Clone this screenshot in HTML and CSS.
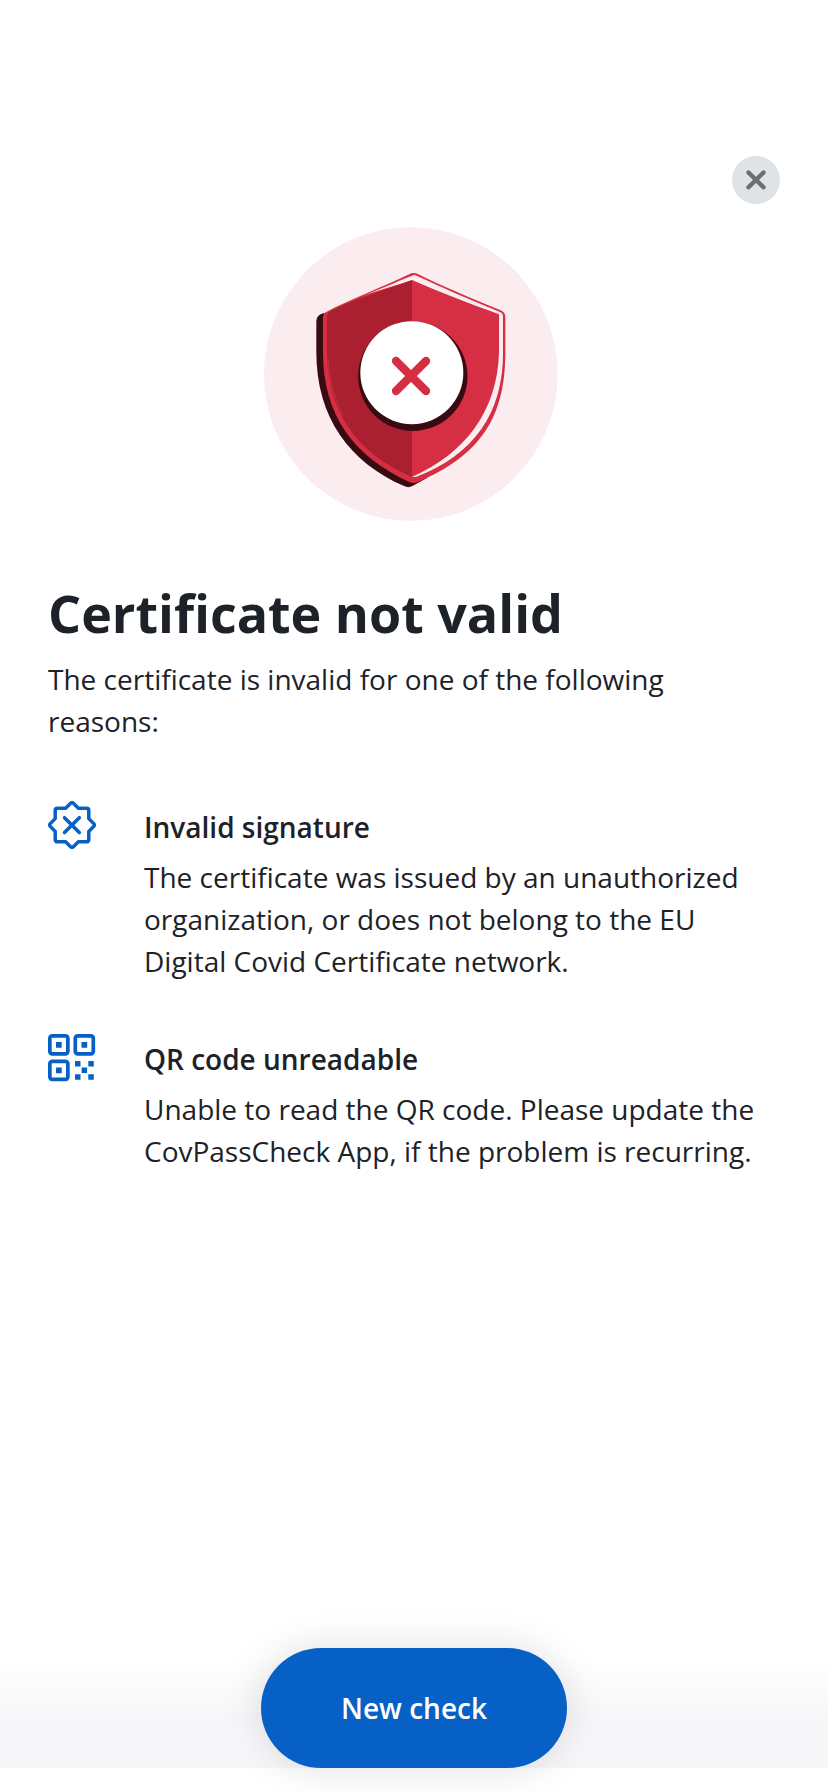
FILE: index.html
```html
<!DOCTYPE html>
<html lang="en">
<head>
<meta charset="utf-8">
<title>Certificate not valid</title>
<link rel="stylesheet" href="styles.css">
</head>
<body>
<div class="screen">
  <header class="topbar">
    <button class="close" aria-label="Close">
      <svg width="48" height="48" viewBox="0 0 48 48"><path d="M16.500 16.500L31.500 31.300M31.500 16.500L16.500 31.300" stroke="#67706d" stroke-width="4.400" stroke-linecap="round"/></svg>
    </button>
  </header>
  <main class="content">
    <svg class="hero" viewBox="42 36 882 882">
      <circle cx="482.500" cy="477" r="440.500" fill="#fbecef"/>
      <path fill="#380a11" d="M222 294Q199 300 199 318V410C199 610 300 742 464 814Q474 819 486 814L532 788L500 700L260 320Z"/>
      <path fill="#d62f43" d="M484 175Q492 172 502 176C580 215 650 243 752 286Q766 292 766 306V412C766 610 690 722 502 802Q490 807 478 801C310 724 219 600 219 412V306Q219 296 230 290C300 254 400 215 484 175Z"/>
      <path fill="#fbecef" d="M486 182Q493 178 500 182C580 220 650 249 750 291Q759 295 759 304V412C760 595 670 722 497 786L486 786V196L335 242C390 224 435 202 486 182Z"/>
      <path fill="#d62f43" d="M486 195C570 232 655 264 747 298V412C742 590 645 716 486 786Z"/>
      <path fill="#aa2030" d="M486 195V786C320 716 232 590 231 412V306Q231 295 242 288C310 252 400 228 486 195Z"/>
      <path d="M234 435C238 500 254 550 278 600" fill="none" stroke="#d04c5c" stroke-width="1.500"/>
      <circle cx="488.500" cy="484" r="164" fill="#380a11"/>
      <circle cx="485.500" cy="473" r="154.500" fill="#fff"/>
      <path d="M438 438L528 528M528 438L438 528" stroke="#d62f43" stroke-width="25" stroke-linecap="round"/>
    </svg>
    <h1 class="title">Certificate not valid</h1>
    <p class="text">The certificate is invalid for one of the following reasons:</p>
    <ul class="reasons">
      <li class="reason">
        <svg class="icon icon-seal" viewBox="0 0 48 48" fill="none" stroke="#0660c6" stroke-width="3.500" stroke-linecap="round" stroke-linejoin="round"><path d="M22.600 2.300Q24 1 25.400 2.300L30.400 7.200H38.400Q40.800 7.200 40.800 9.600V17.600L45.700 22.600Q47 24 45.700 25.400L40.800 30.400V38.400Q40.800 40.800 38.400 40.800H30.400L25.400 45.700Q24 47 22.600 45.700L17.600 40.800H9.600Q7.200 40.800 7.200 38.400V30.400L2.300 25.400Q1 24 2.300 22.600L7.200 17.600V9.600Q7.200 7.200 9.600 7.200H17.600Z"/><path d="M16.500 16.700L31.300 31.500M31.300 16.700L16.500 31.500"/></svg>
        <div class="body">
          <h2 class="subtitle">Invalid signature</h2>
          <p class="text">The certificate was issued by an unauthorized organization, or does not belong to the EU Digital Covid Certificate network.</p>
        </div>
      </li>
      <li class="reason">
        <svg class="icon icon-qr" viewBox="0 0 48 48" fill="#0660c6"><g fill="none" stroke="#0660c6" stroke-width="3.700"><rect x="1.850" y="1.850" width="18" height="18" rx="2.300"/><rect x="27.300" y="1.850" width="18" height="18" rx="2.300"/><rect x="1.850" y="27.300" width="18" height="18" rx="2.300"/></g><path d="M8 8h5.700v5.700H8zM33.500 8h5.700v5.700h-5.700zM8 33.500h5.700v5.700H8zM27 27h5.500v5.500H27zM40.300 27h5.500v5.500h-5.500zM33.600 33.600h5.500v5.500h-5.500zM27 40.300h5.500v5.500H27zM40.300 40.300h5.500v5.500h-5.500z"/></svg>
        <div class="body">
          <h2 class="subtitle">QR code unreadable</h2>
          <p class="text">Unable to read the QR code. Please update the CovPassCheck App, if the problem is recurring.</p>
        </div>
      </li>
    </ul>
  </main>
  <footer class="actions"><button class="primary">New check</button></footer>
</div>
</body>
</html>
```
FILE: styles.css
```css
* { box-sizing: border-box; margin: 0; padding: 0; }
body { background: #fff; color: #1d2228; font-family: "Open Sans", "Noto Sans", sans-serif; }
.screen { display: flex; flex-direction: column; height: 1792px; padding-bottom: 24px; overflow: hidden; }
.topbar { display: flex; justify-content: flex-end; padding: 156px 48px 0; }
.close { width: 48px; height: 48px; border: 0; border-radius: 50%; background: #dfe3e6; }
.close svg { display: block; }
.content { display: flex; flex-direction: column; flex: 1; padding: 23px 48px 0; }
.hero { width: 294px; height: 294px; margin-left: 216px; }
.title { margin-top: 57px; font-size: 52px; line-height: 70px; font-weight: 700; }
.title + .text { margin-top: 10px; }
.text { font-size: 28px; line-height: 42px; }
.reasons { display: flex; flex-direction: column; gap: 56px; margin-top: 64px; list-style: none; }
.reason { display: flex; align-items: flex-start; gap: 48px; }
.icon { flex: none; width: 48px; height: 48px; }
.icon-seal { margin-top: -5px; }
.icon-qr { margin-top: -4px; }
.body { flex: 1; }
.subtitle { margin-bottom: 8px; font-size: 28px; line-height: 42px; font-weight: 600; }
.actions { display: flex; justify-content: center; background: linear-gradient(#fff 8%, #f7f7fa 58%); }
.primary { width: 306px; height: 120px; border: 0; border-radius: 60px; background: #0660c6; color: #fff; font: 600 28px/42px "Open Sans", "Noto Sans", sans-serif; box-shadow: 0 0 40px rgba(0, 0, 0, 0.13); }
```
